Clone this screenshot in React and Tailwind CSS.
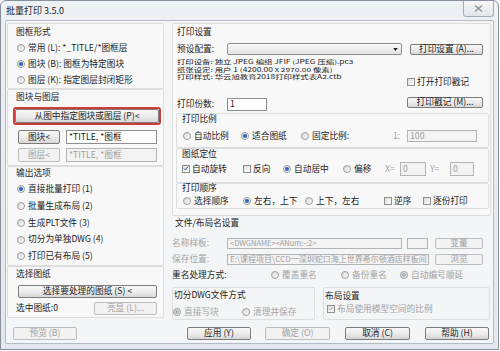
import React from "react";

const Radio = ({ on, dis, className = "", children }) => (
  <div
    className={`flex shrink-0 items-center gap-[3px] leading-none ${
      dis ? "text-[#a3a3a3]" : "text-[#1c1c1c]"
    } ${className}`}
  >
    <span className="flex h-[8px] w-[8px] shrink-0 items-center justify-center rounded-full border border-[#9c9c9c] bg-gradient-to-br from-[#d9d9d9] to-[#fbfbfb]">
      {on && (
        <span
          className={`h-[4px] w-[4px] rounded-full ${
            dis ? "bg-[#a9b1bb]" : "bg-[#2f67bd]"
          }`}
        />
      )}
    </span>
    <span className="whitespace-nowrap">{children}</span>
  </div>
);

const Check = ({ on, dis, className = "", children }) => (
  <div
    className={`flex shrink-0 items-center gap-[2px] leading-none ${
      dis ? "text-[#a3a3a3]" : "text-[#1c1c1c]"
    } ${className}`}
  >
    <span className="flex h-[8px] w-[8px] shrink-0 items-center justify-center border border-[#8f8f8f] bg-gradient-to-br from-[#dcdcdc] to-white">
      {on && (
        <svg viewBox="0 0 8 8" className="h-[7px] w-[7px]">
          <path
            d="M1.4 4.2 L3.2 6 L6.6 1.5"
            fill="none"
            stroke={dis ? "#a0a8b0" : "#2b4f8f"}
            strokeWidth="1.3"
          />
        </svg>
      )}
    </span>
    <span className="whitespace-nowrap">{children}</span>
  </div>
);

const Btn = ({ dis, className = "", children }) => (
  <div
    className={`flex shrink-0 items-center justify-center whitespace-nowrap rounded-[2px] border leading-none ${
      dis
        ? "border-[#bdbdbd] bg-[#f2f2f2] text-[#a3a3a3]"
        : "border-[#7d7d7d] bg-gradient-to-b from-[#f8f8f8] via-[#ececec] to-[#d8d8d8] text-[#1c1c1c]"
    } ${className}`}
  >
    {children}
  </div>
);

const Field = ({ dis, className = "", children }) => (
  <div
    className={`flex shrink-0 items-center overflow-hidden whitespace-nowrap border px-[2px] leading-none ${
      dis
        ? "border-[#b4b4b4] bg-[#f3f3f3] text-[#a0a0a0]"
        : "border-[#8e8e8e] bg-white text-[#1c1c1c]"
    } ${className}`}
  >
    {children}
  </div>
);

const Group = ({ className = "", children }) => (
  <div className={`flex flex-col rounded-[2px] border border-[#dedede] ${className}`}>
    {children}
  </div>
);

export default function App() {
  return (
    <div className="h-[351px] w-[500px] overflow-hidden bg-white font-['Noto_Sans_CJK_SC',sans-serif] text-[8.7px] text-[#1c1c1c]">
      <div className="flex h-[350px] w-[499px] flex-col rounded-t-[6px] border border-[#86919d] bg-gradient-to-b from-[#eef1f4] to-[#e3e8ee]">
        {/* title bar */}
        <div className="flex h-[19px] items-start justify-between">
          <div className="pl-[5px] pt-[5px] text-[9px] leading-none text-[#222]">批量打印 3.5.0</div>
          <div className="mr-[4px] flex h-[16px] w-[31px] items-center justify-center rounded-b-[3px] border border-t-0 border-[#a3adb8] bg-gradient-to-b from-[#f6f7f8] to-[#e2e6ea]">
            <svg viewBox="0 0 10 8" className="h-[7px] w-[9px]">
              <path d="M1 0.5 L9 7.5 M9 0.5 L1 7.5" stroke="#8a8f95" strokeWidth="1.4" fill="none" />
            </svg>
          </div>
        </div>

        {/* client */}
        <div className="mx-[4px] flex h-[324px] flex-col rounded-[2px] border border-[#b3bcc6] bg-[#f4f5f6]">
          <div className="flex h-[299px]">
            {/* left column */}
            <div className="ml-[1px] flex w-[157px] flex-col pt-[2px]">
              <Group className="h-[66px] bg-[#f8f8f8]">
                <div className="mt-[2px] flex h-[12px] items-center pl-[8px] leading-none">图框形式</div>
                <div className="mt-[2px] flex flex-col pl-[9px]">
                  <Radio className="h-[16px]">常用 (L): *_TITLE/*图框层</Radio>
                  <Radio on className="h-[16px]">图块 (B): 图框为特定图块</Radio>
                  <Radio className="h-[16px]">图层 (K): 指定图层封闭矩形</Radio>
                </div>
              </Group>

              <Group className="h-[77px] bg-[#f8f8f8]">
                <div className="mt-[1px] flex h-[12px] items-center pl-[8px] leading-none">图块与图层</div>
                <div className="ml-[5px] mt-[4px] h-[18px] w-[148px] rounded-[3px] border-2 border-[#cf3b3b]">
                  <Btn className="h-full w-full">从图中指定图块或图层 (P)&lt;</Btn>
                </div>
                <div className="ml-[10px] mt-[5px] flex h-[14px] gap-[6px]">
                  <Btn className="h-full w-[42px]">图块&lt;</Btn>
                  <Field className="h-full w-[91px]">*TITLE, *图框</Field>
                </div>
                <div className="ml-[10px] mt-[4px] flex h-[14px] gap-[6px]">
                  <Btn dis className="h-full w-[42px]">图层&lt;</Btn>
                  <Field dis className="h-full w-[91px]">*TITLE, *图框</Field>
                </div>
              </Group>

              <Group className="h-[100px] bg-[#f8f8f8]">
                <div className="flex h-[12px] items-center pl-[8px] leading-none">输出选项</div>
                <div className="mt-[2px] flex flex-col pl-[9px]">
                  <Radio on className="h-[16.75px]">直接批量打印 (1)</Radio>
                  <Radio className="h-[16.75px]">批量生成布局 (2)</Radio>
                  <Radio className="h-[16.75px]">生成PLT文件 (3)</Radio>
                  <Radio className="h-[16.75px]">切分为单独DWG (4)</Radio>
                  <Radio className="h-[16.75px]">打印已有布局 (5)</Radio>
                </div>
              </Group>

              <Group className="h-[52px] bg-[#f8f8f8]">
                <div className="mt-[1px] flex h-[12px] items-center pl-[8px] leading-none">选择图纸</div>
                <Btn className="ml-[10px] mt-[5px] h-[13px] w-[139px]">选择要处理的图纸 (S) &lt;</Btn>
                <div className="mt-[3px] flex h-[14px] items-center pl-[8px]">
                  <span className="leading-none">选中图纸:0</span>
                  <Btn dis className="ml-auto mr-[6px] h-[13px] w-[63px]">亮显 (L)...</Btn>
                </div>
              </Group>
            </div>

            {/* right column */}
            <div className="ml-[8px] flex w-[319px] flex-col">
              <div className="mt-[2px] flex h-[193px] flex-col rounded-[2px] border border-[#dedede] bg-[#f8f8f8]">
                <div className="mt-[2px] flex h-[12px] items-center pl-[4px] leading-none">打印设置</div>
                <div className="mt-[5px] flex h-[12px] items-center pl-[4px]">
                  <span className="w-[50px] leading-none">预设配置:</span>
                  <div className="flex h-[12px] w-[175px] items-center justify-end rounded-[2px] border border-[#8e8e8e] bg-gradient-to-b from-[#fafafa] to-[#e2e2e2] pr-[3px]">
                    <svg viewBox="0 0 6 4" className="h-[3px] w-[5px]">
                      <path d="M0 0 H6 L3 4 Z" fill="#222" />
                    </svg>
                  </div>
                  <Btn className="ml-[8px] h-[11px] w-[73px]">打印设置 (A)...</Btn>
                </div>
                <div className="mt-[2px] flex h-[54px]">
                  <div className="flex flex-1 flex-col pl-[4px]">
                    <div className="h-[24px]">
                      <div className="origin-top scale-y-[0.66] whitespace-nowrap text-[8.4px] leading-[12px]">
                        <div>打印设备: 独立 JPEG 编组 JFIF (JPEG 压缩).pc3</div>
                        <div>纸张设定: 用户 1 (4200.00 x 2970.00 像素)</div>
                        <div>打印样式: 华云旭教育2018打印样式表A2.ctb</div>
                      </div>
                    </div>
                    <div className="mt-[17px] flex h-[13px] items-center">
                      <span className="w-[50px] leading-none">打印份数:</span>
                      <Field className="h-[13px] w-[40px]">1</Field>
                    </div>
                  </div>
                  <div className="mr-[7px] flex w-[76px] flex-col">
                    <Check className="mt-[20px] h-[10px]">打开打印戳记</Check>
                    <Btn className="mt-[10px] h-[11px] w-[76px]">打印戳记 (M)...</Btn>
                  </div>
                </div>

                <Group className="ml-[3px] mt-[2px] h-[35px] w-[313px]">
                  <div className="flex h-[10px] items-center pl-[5px] leading-none">打印比例</div>
                  <div className="mt-[6px] flex h-[12px] items-center pl-[6px]">
                    <Radio className="w-[58px]">自动比例</Radio>
                    <Radio on className="w-[60px]">适合图纸</Radio>
                    <Radio className="w-[92px]">固定比例:</Radio>
                    <span className="w-[14px] leading-none text-[#a3a3a3]">1:</span>
                    <Field dis className="h-[12px] w-[70px]">100</Field>
                  </div>
                </Group>

                <Group className="ml-[3px] h-[35px] w-[313px]">
                  <div className="flex h-[10px] items-center pl-[5px] leading-none">图纸定位</div>
                  <div className="mt-[3px] flex h-[14px] items-center pl-[5px]">
                    <Check on className="w-[61px]">自动旋转</Check>
                    <Check className="w-[40px]">反向</Check>
                    <Radio on className="w-[60px]">自动居中</Radio>
                    <Radio className="w-[42px]">偏移</Radio>
                    <span className="w-[15px] leading-none text-[#a3a3a3]">X=</span>
                    <Field dis className="h-[14px] w-[26px]">0</Field>
                    <span className="ml-[4px] w-[20px] leading-none text-[#a3a3a3]">Y=</span>
                    <Field dis className="h-[14px] w-[24px]">0</Field>
                  </div>
                </Group>

                <Group className="ml-[3px] h-[26px] w-[313px]">
                  <div className="flex h-[9px] items-center pl-[5px] leading-none">打印顺序</div>
                  <div className="mt-[2px] flex h-[12px] items-center pl-[6px]">
                    <Radio className="w-[60px]">选择顺序</Radio>
                    <Radio on className="w-[62px]">左右，上下</Radio>
                    <Radio className="w-[79px]">上下，左右</Radio>
                    <Check className="w-[39px]">逆序</Check>
                    <Check>逐份打印</Check>
                  </div>
                </Group>
              </div>

              <div className="mt-[1px] flex h-[12px] items-center pl-[3px] leading-none">文件/布局名设置</div>
              <div className="mt-[8px] flex h-[12px] items-center">
                <span className="w-[55px] leading-none text-[#a3a3a3]">名称样板:</span>
                <Field dis className="h-[11px] w-[175px] text-[7.5px]">&lt;DWGNAME&gt;&lt;ANum:-:2&gt;</Field>
                <Field dis className="ml-[5px] h-[11px] w-[21px]" />
                <Btn dis className="ml-[7px] h-[11px] w-[48px]">变量</Btn>
              </div>
              <div className="mt-[4px] flex h-[12px] items-center">
                <span className="w-[55px] leading-none text-[#a3a3a3]">保存位置:</span>
                <Field dis className="h-[11px] w-[202px] text-[8px]">E:\课程项目\CCD一深圳蛇口海上世界希尔顿酒店样板间</Field>
                <Btn dis className="ml-[6px] h-[11px] w-[48px]">浏览</Btn>
              </div>
              <div className="mt-[4px] flex h-[12px] items-center">
                <span className="w-[99px] leading-none">重名处理方式:</span>
                <Radio dis className="w-[70px]">覆盖重名</Radio>
                <Radio dis className="w-[59px]">备份重名</Radio>
                <Radio dis on>自动编号顺延</Radio>
              </div>

              <div className="mt-[6px] flex h-[33px]">
                <Group className="w-[143px]">
                  <div className="mt-[1px] flex h-[12px] items-center pl-[1px] leading-none">切分DWG文件方式</div>
                  <div className="mt-[5px] flex h-[12px] items-center">
                    <Radio dis on className="w-[69px]">直接写块</Radio>
                    <Radio dis>清理并保存</Radio>
                  </div>
                </Group>
                <Group className="ml-[8px] mr-[1px] flex-1">
                  <div className="mt-[2px] flex h-[12px] items-center pl-[1px] leading-none">布局设置</div>
                  <div className="mt-[1px] flex h-[12px] items-center pl-[3px]">
                    <Check dis on>布局使用模型空间的比例</Check>
                  </div>
                </Group>
              </div>
            </div>
          </div>

          {/* bottom buttons */}
          <div className="mt-[7px] flex h-[13px]">
            <Btn dis className="ml-[7px] h-[13px] w-[64px]">预览 (B)</Btn>
            <Btn className="ml-[110px] h-[13px] w-[64px]">应用 (Y)</Btn>
            <Btn dis className="ml-[14px] h-[13px] w-[65px]">确定 (O)</Btn>
            <Btn className="ml-[15px] h-[13px] w-[65px]">取消 (C)</Btn>
            <Btn className="ml-[15px] h-[13px] w-[64px]">帮助 (H)</Btn>
          </div>
        </div>
      </div>
    </div>
  );
}
